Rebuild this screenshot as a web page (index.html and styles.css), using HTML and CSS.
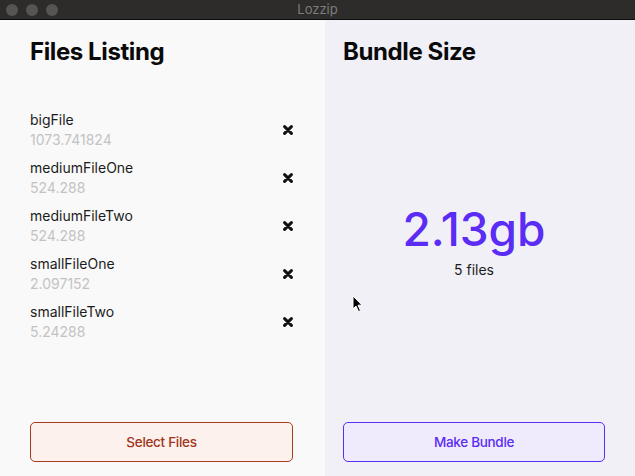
FILE: index.html
```html
<!DOCTYPE html>
<html>
<head>
<meta charset="utf-8">
<link rel="stylesheet" href="styles.css">
</head>
<body>
<div class="window">
  <div class="titlebar">
    <div class="lights"><span class="light"></span><span class="light"></span><span class="light"></span></div>
    <div class="title">Lozzip</div>
  </div>
  <div class="main">
    <section class="pane pane-left">
      <h1 class="heading">Files Listing</h1>
      <ul class="files">
        <li class="file"><div class="file-info"><div class="file-name">bigFile</div><div class="file-size">1073.741824</div></div><svg class="remove" viewBox="0 0 10 10" width="10" height="10"><path d="M1.6 1.6 L8.4 8.4 M8.4 1.6 L1.6 8.4" /></svg></li>
        <li class="file"><div class="file-info"><div class="file-name">mediumFileOne</div><div class="file-size">524.288</div></div><svg class="remove" viewBox="0 0 10 10" width="10" height="10"><path d="M1.6 1.6 L8.4 8.4 M8.4 1.6 L1.6 8.4" /></svg></li>
        <li class="file"><div class="file-info"><div class="file-name">mediumFileTwo</div><div class="file-size">524.288</div></div><svg class="remove" viewBox="0 0 10 10" width="10" height="10"><path d="M1.6 1.6 L8.4 8.4 M8.4 1.6 L1.6 8.4" /></svg></li>
        <li class="file"><div class="file-info"><div class="file-name">smallFileOne</div><div class="file-size">2.097152</div></div><svg class="remove" viewBox="0 0 10 10" width="10" height="10"><path d="M1.6 1.6 L8.4 8.4 M8.4 1.6 L1.6 8.4" /></svg></li>
        <li class="file"><div class="file-info"><div class="file-name">smallFileTwo</div><div class="file-size">5.24288</div></div><svg class="remove" viewBox="0 0 10 10" width="10" height="10"><path d="M1.6 1.6 L8.4 8.4 M8.4 1.6 L1.6 8.4" /></svg></li>
      </ul>
      <button class="btn btn-select">Select Files</button>
    </section>
    <section class="pane pane-right">
      <h1 class="heading">Bundle Size</h1>
      <div class="summary">
        <div class="total">2.13gb</div>
        <div class="count">5 files</div>
      </div>
      <button class="btn btn-bundle">Make Bundle</button>
      <svg class="cursor" viewBox="0 0 12 18" width="12" height="18"><path d="M1 1 L1 14 L4 11 L6.5 16.5 L8.5 15.6 L6 10.2 L10 10.2 Z" fill="#000" stroke="#fff" stroke-width="1"/></svg>
    </section>
  </div>
</div>
</body>
</html>
```
FILE: styles.css
```css
* { box-sizing: border-box; }
html, body { margin: 0; padding: 0; }
body {
  width: 635px;
  height: 476px;
  overflow: hidden;
  font-family: "Inter", "Noto Sans", sans-serif;
  background: #f9f9f9;
}
.window { width: 635px; height: 476px; display: flex; flex-direction: column; }
.titlebar {
  height: 20px;
  flex: none;
  background: #2e2c2a;
  border-bottom: 1px solid #0c0c0c;
  position: relative;
  display: flex;
  align-items: center;
}
.lights { display: flex; gap: 8px; padding-left: 6px; }
.light { width: 12px; height: 12px; border-radius: 50%; background: #565554; }
.title {
  position: absolute;
  left: 0; right: 0; top: 0;
  text-align: center;
  font-size: 13px;
  line-height: 19px;
  color: #7d7c7b;
}
.main { flex: 1; display: flex; }
.pane { display: flex; flex-direction: column; position: relative; }
.pane-left { width: 325px; padding: 0 32px 14px 30px; background: #f9f9f9; }
.pane-right { width: 310px; padding: 0 30px 14px 18px; background: #f1f0f7; }
.heading {
  margin: 17px 0 0;
  font-size: 24px;
  line-height: 30px;
  font-weight: 700;
  color: #0a0a0a;
  letter-spacing: -0.4px;
}
.files { list-style: none; margin: 43px 0 0; padding: 0; display: flex; flex-direction: column; gap: 8px; }
.file { display: flex; align-items: center; justify-content: space-between; }
.file-name { font-size: 14px; line-height: 20px; color: #1c1c1c; }
.file-size { font-size: 14px; line-height: 20px; color: #c3c3c3; }
.remove { fill: none; stroke: #111; stroke-width: 3; stroke-linecap: round; }
.btn {
  margin-top: auto;
  height: 40px;
  width: 100%;
  border-radius: 5px;
  font-family: "Inter", "Noto Sans", sans-serif;
  font-size: 13.5px;
  letter-spacing: -0.3px;
  font-weight: 500;
  cursor: pointer;
}
.btn-select { border: 1px solid #a83a20; background: #fcf1ed; color: #a3351b; }
.btn-bundle { border: 1px solid #5a2cf4; background: #f0ebfc; color: #5a2cf4; }
.summary {
  flex: 1;
  display: flex;
  flex-direction: column;
  align-items: center;
  justify-content: center;
  padding-bottom: 7px;
}
.total { font-size: 46px; line-height: 54px; color: #5a2cf4; font-weight: 500; }
.count { margin-top: 4px; font-size: 14px; line-height: 20px; color: #1c1c1c; }
.cursor { position: absolute; left: 27px; top: 275px; }
```
